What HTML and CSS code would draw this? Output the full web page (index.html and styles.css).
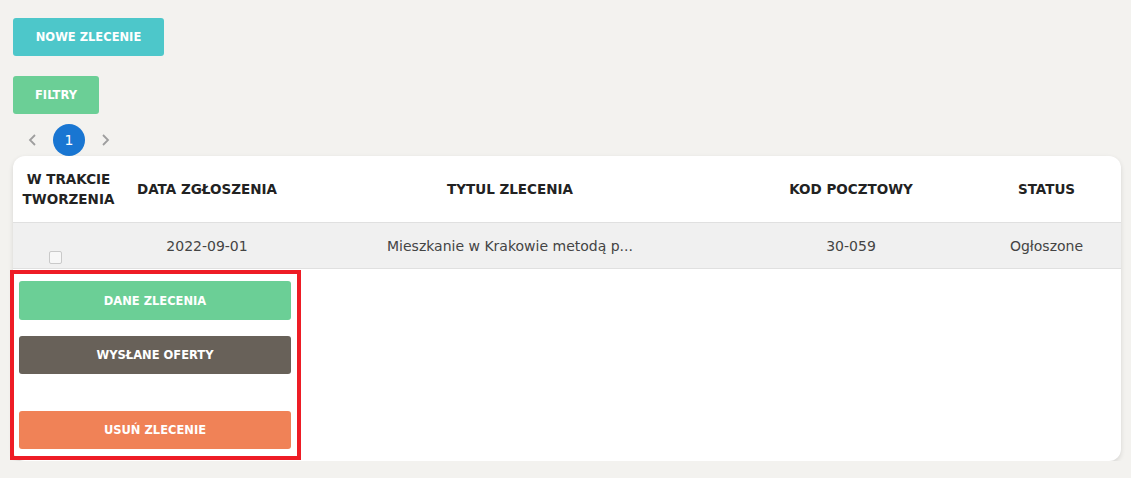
FILE: index.html
```html
<!DOCTYPE html>
<html lang="pl">
<head>
<meta charset="utf-8">
<link rel="stylesheet" href="styles.css">
</head>
<body>
<div class="page">
  <button class="btn btn-teal btn-new">NOWE ZLECENIE</button>
  <button class="btn btn-green btn-filter">FILTRY</button>
  <nav class="pager">
    <span class="chev">
      <svg width="10" height="12" viewBox="0 0 10 12"><path d="M7 1 L2 6 L7 11" fill="none" stroke="#9e9e9e" stroke-width="1.8"/></svg>
    </span>
    <span class="page-num">1</span>
    <span class="chev">
      <svg width="10" height="12" viewBox="0 0 10 12"><path d="M3 1 L8 6 L3 11" fill="none" stroke="#9e9e9e" stroke-width="1.8"/></svg>
    </span>
  </nav>
  <div class="card">
    <div class="row head">
      <div class="cell">W TRAKCIE<br>TWORZENIA</div>
      <div class="cell">DATA ZGŁOSZENIA</div>
      <div class="cell">TYTUL ZLECENIA</div>
      <div class="cell">KOD POCZTOWY</div>
      <div class="cell">STATUS</div>
    </div>
    <div class="row data">
      <div class="cell check-cell"><span class="checkbox"></span></div>
      <div class="cell">2022-09-01</div>
      <div class="cell">Mieszkanie w Krakowie metodą p...</div>
      <div class="cell">30-059</div>
      <div class="cell">Ogłoszone</div>
    </div>
    <div class="actions">
      <button class="btn btn-green act act-first">DANE ZLECENIA</button>
      <button class="btn btn-brown act act-mid">WYSŁANE OFERTY</button>
      <button class="btn btn-orange act act-last">USUŃ ZLECENIE</button>
    </div>
  </div>
</div>
</body>
</html>
```

FILE: styles.css
```css
* { box-sizing: border-box; }
html, body {
  margin: 0;
  background: #f3f2ef;
  font-family: "DejaVu Sans", "Noto Sans", sans-serif;
}
.page {
  padding: 18px 10px 0 13px;
  display: flex;
  flex-direction: column;
  align-items: flex-start;
}
.btn {
  border: none;
  border-radius: 3px;
  color: #fff;
  font-family: inherit;
  font-weight: bold;
  font-size: 11.5px;
  height: 38px;
  cursor: pointer;
  padding: 0;
}
.btn-teal { background: #4dc7ca; }
.btn-green { background: #6bcf96; }
.btn-brown { background: #686159; }
.btn-orange { background: #f08257; }
.btn-new { width: 151px; }
.btn-filter { width: 86px; margin-top: 20px; }
.pager {
  display: flex;
  align-items: center;
  margin-top: 10px;
  height: 32px;
}
.chev {
  width: 40px;
  display: flex;
  justify-content: center;
  align-items: center;
}
.page-num {
  width: 32px;
  height: 32px;
  border-radius: 50%;
  background: #1976d2;
  color: #fff;
  font-size: 14px;
  display: flex;
  align-items: center;
  justify-content: center;
}
.card {
  width: 1108px;
  background: #fff;
  border-radius: 12px;
  box-shadow: 0 2px 5px rgba(0,0,0,0.12);
  padding-bottom: 1px;
}
.row {
  display: grid;
  grid-template-columns: 111px 166px 440px 242px 149px;
  border-bottom: 1px solid #e0e0e0;
}
.cell {
  display: flex;
  align-items: center;
  justify-content: center;
  text-align: center;
}
.head {
  height: 67px;
  font-weight: bold;
  font-size: 13.5px;
  color: #222;
  line-height: 20px;
}
.data {
  height: 46px;
  background: #f0f0f0;
  font-size: 14px;
  color: #444;
}
.check-cell {
  align-items: flex-end;
  padding-bottom: 4px;
  padding-right: 27px;
}
.checkbox {
  width: 13px;
  height: 13px;
  border: 1px solid #c9c9c9;
  border-radius: 2px;
  background: #f7f7f7;
}
.actions {
  margin-left: -3px;
  margin-top: 1px;
  width: 291px;
  border: 4px solid #ee1c25;
  padding: 7px 6px 7px 5px;
  display: flex;
  flex-direction: column;
}
.act { width: 272px; }
.act-first { height: 39px; }
.act-mid { margin-top: 16px; }
.act-last { margin-top: 37px; }
```
